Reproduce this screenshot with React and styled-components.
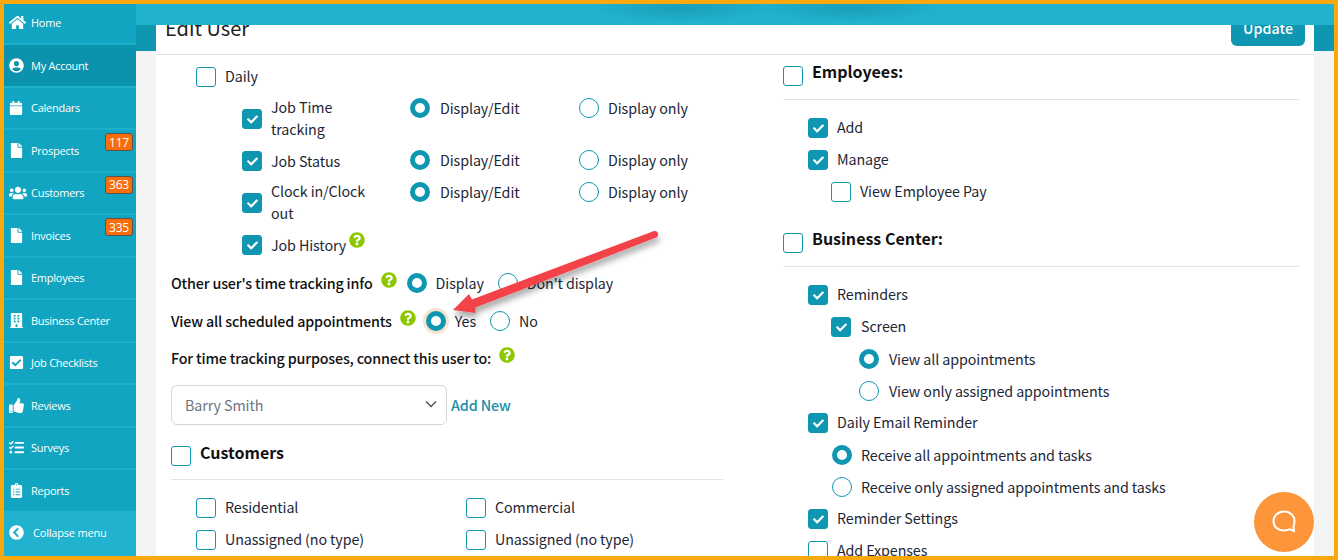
import React from 'react';
import styled, { createGlobalStyle } from 'styled-components';
import {
  FaHome, FaUserCircle, FaCalendar, FaFile, FaUsers, FaBuilding, FaCheckSquare,
  FaThumbsUp, FaTasks, FaClipboardList, FaChevronCircleLeft, FaQuestionCircle, FaCheck,
} from 'react-icons/fa';

const TEAL = '#0f96b0';
const INK = '#1d2636';

const Global = createGlobalStyle`
  html, body { margin: 0; padding: 0; background: #fff; }
  * { box-sizing: border-box; }
  body {
    font-family: "Noto Sans CJK JP", "Noto Sans", sans-serif;
    font-size: 14.3px;
    letter-spacing: -0.1px;
    color: ${INK};
  }
`;

const Frame = styled.div`
  position: relative;
  width: 1338px;
  height: 560px;
  border: 4px solid #f9a90e;
  display: flex;
  overflow: hidden;
`;

const Sidebar = styled.nav`
  width: 132px;
  flex: none;
  display: flex;
  flex-direction: column;
  background: #12a5c1;
`;

const NavItem = styled.div`
  position: relative;
  height: 42.5px;
  flex: none;
  display: flex;
  align-items: center;
  padding-left: 5px;
  border-bottom: 2px solid #1cb0cc;
  background: ${(p) => (p.$active ? '#0b93ad' : 'transparent')};
  color: #fff;
  font-family: "Open Sans", sans-serif;
  font-size: 11px;
  letter-spacing: -0.25px;
  &:first-child { margin-top: -1.5px; }
`;

const NavIcon = styled.span`
  width: 22px;
  flex: none;
  display: flex;
  justify-content: flex-start;
  font-size: ${(p) => p.$size || 15}px;
  svg { display: block; }
`;

const Badge = styled.span`
  position: absolute;
  right: 3px;
  top: 3px;
  width: 28px;
  height: 18px;
  display: flex;
  align-items: center;
  justify-content: center;
  background: #f86e0c;
  border: 1px solid #5a5347;
  border-radius: 3px;
  font-size: 12px;
  letter-spacing: -0.2px;
  color: #fff;
`;

const Collapse = styled.div`
  flex: 1;
  margin-top: -2px;
  position: relative;
  display: flex;
  align-items: center;
  padding: 0 0 1px 5px;
  gap: 9px;
  background: #20b2ce;
  color: #fff;
  font-family: "Open Sans", sans-serif;
  font-size: 11px;
  letter-spacing: -0.2px;
  svg { font-size: 15px; }
`;

const Main = styled.main`
  flex: 1;
  min-width: 0;
  display: flex;
  flex-direction: column;
`;

const TopBar = styled.header`
  position: relative;
  z-index: 2;
  height: 21px;
  flex: none;
  background:
    radial-gradient(90px 14px at 545px 4px, rgba(10, 110, 135, 0.3), transparent),
    radial-gradient(90px 14px at 715px 4px, rgba(10, 110, 135, 0.3), transparent),
    #20b2ce;
`;

const Content = styled.div`
  flex: 1;
  min-height: 0;
  overflow: hidden;
  padding: 0 20px;
  background: linear-gradient(#0f96b0 26px, #f4f4f4 26px);
`;

const Card = styled.section`
  margin-top: -30px;
  background: #fff;
`;

const CardHeader = styled.div`
  height: 60px;
  display: flex;
  align-items: flex-end;
  justify-content: space-between;
  padding: 0 9px 8px 9px;
  border-bottom: 1px solid #e3e3ec;
`;

const Title = styled.h1`
  margin: 0 0 1px;
  font-size: 20px;
  font-weight: 400;
  line-height: 34px;
  letter-spacing: 0;
  color: #222;
`;

const UpdateButton = styled.button`
  width: 74px;
  height: 34px;
  padding: 0 0 3px;
  border: 0;
  border-radius: 6px;
  background: ${TEAL};
  color: #fff;
  font: 500 14.3px "Noto Sans CJK JP", sans-serif;
`;

const Columns = styled.div`
  display: grid;
  grid-template-columns: 552px 516px;
  column-gap: 60px;
  padding: 6px 15px 0;
`;

const Column = styled.div`
  display: flex;
  flex-direction: column;
`;

const BoxMark = styled.span`
  width: 20px;
  height: 20px;
  flex: none;
  display: flex;
  align-items: center;
  justify-content: center;
  border: 1px solid ${TEAL};
  border-radius: 3px;
  background: ${(p) => (p.$on ? TEAL : '#fff')};
  color: #fff;
  font-size: 11px;
`;

const RadioMark = styled.span`
  width: 20px;
  height: 20px;
  flex: none;
  border-radius: 50%;
  background: #fff;
  border: ${(p) => (p.$on ? `5.5px solid ${TEAL}` : `1px solid ${TEAL}`)};
  box-shadow: ${(p) => (p.$glow ? '0 0 0 3px rgba(240, 190, 150, 0.45)' : 'none')};
`;

const Check = ({ on }) => <BoxMark $on={on}>{on && <FaCheck />}</BoxMark>;

const Line = styled.div`
  display: flex;
  align-items: center;
  height: 32px;
  gap: ${(p) => p.$gap || 9}px;
  margin-left: ${(p) => p.$indent || 0}px;
  line-height: 22px;
  white-space: nowrap;
`;

const LineText = styled.span`
  padding-bottom: ${(p) => (p.$radio ? 0 : 2)}px;
`;

const PermGrid = styled.div`
  display: grid;
  grid-template-columns: 168px 169px 1fr;
  row-gap: 9px;
  margin: 4px 0 0 71px;
  line-height: 22px;
`;

const PermName = styled.div`
  display: flex;
  align-items: center;
  gap: 9px;
`;

const PermText = styled.span`
  width: 110px;
  margin: ${(p) => (p.$single ? 0 : '-1px 0 1px')};
`;

const PermOption = styled.div`
  display: flex;
  align-items: flex-start;
  gap: ${(p) => p.$gap}px;
  margin-top: ${(p) => (p.$single ? 0 : 1)}px;
`;

const PermLabel = styled.span`
  margin-top: -1px;
`;

const Help = styled(FaQuestionCircle)`
  flex: none;
  color: #8cc800;
  font-size: 16px;
  position: relative;
  top: -3px;
`;

const Setting = styled.div`
  display: flex;
  align-items: center;
  height: 22px;
  margin-top: ${(p) => p.$top || 0}px;
  line-height: 22px;
  white-space: nowrap;
`;

const SettingName = styled.span`
  font-weight: 500;
  letter-spacing: -0.17px;
  color: #111;
  margin-right: ${(p) => p.$space || 8}px;
`;

const SettingOption = styled.span`
  display: flex;
  align-items: center;
  gap: 9px;
  margin-left: ${(p) => p.$left || 10}px;
`;

const SelectRow = styled.div`
  display: flex;
  align-items: center;
  gap: 4px;
  margin-top: 16px;
`;

const SelectBox = styled.div`
  width: 276px;
  height: 40px;
  display: flex;
  align-items: center;
  justify-content: space-between;
  padding: 0 9px 2px 13px;
  border: 1px solid #d5d3dd;
  border-radius: 6px;
  color: #6d7480;
`;

const AddNew = styled.a`
  font-weight: 500;
  margin-top: -2px;
  color: #1a8fa8;
`;

const SectionHead = styled.div`
  display: flex;
  gap: 9px;
  margin-top: ${(p) => p.$top || 0}px;
  padding-top: ${(p) => p.$pad || 0}px;
  height: ${(p) => p.$height}px;
  border-bottom: 1px solid #e3e3ec;
  font-size: 16px;
  font-weight: 700;
  line-height: ${(p) => p.$line || 11}px;
  letter-spacing: 0;
  color: #111;
`;

const TypeGrid = styled.div`
  display: grid;
  grid-template-columns: 270px 1fr;
  margin: 12px 0 0 25px;
`;

const RowSpacer = styled.div`
  height: 12px;
  flex: none;
`;

const Arrow = styled.svg`
  position: absolute;
  left: 0;
  top: 0;
  width: 1330px;
  height: 552px;
  pointer-events: none;
  z-index: 3;
`;

const ChatButton = styled.div`
  position: absolute;
  z-index: 3;
  left: 1250px;
  top: 488px;
  width: 60px;
  height: 60px;
  border-radius: 50%;
  background: #fd953a;
  display: flex;
  align-items: center;
  justify-content: center;
`;

const nav = [
  ['Home', FaHome, 17],
  ['My Account', FaUserCircle, 15, null, true],
  ['Calendars', FaCalendar, 14],
  ['Prospects', FaFile, 15, '117'],
  ['Customers', FaUsers, 18, '363'],
  ['Invoices', FaFile, 15, '335'],
  ['Employees', FaFile, 15],
  ['Business Center', FaBuilding, 15],
  ['Job Checklists', FaCheckSquare, 15],
  ['Reviews', FaThumbsUp, 15],
  ['Surveys', FaTasks, 15],
  ['Reports', FaClipboardList, 15],
];

const Perm = ({ lines, single, help }) => (
  <>
    <PermName>
      <Check on />
      <PermText $single={single}>
        {lines.map((l, i) => (
          <React.Fragment key={l}>
            {i > 0 && <br />}
            {l}
          </React.Fragment>
        ))}
        {help && <> <Help /></>}
      </PermText>
    </PermName>
    {!help && (
      <>
        <PermOption $single={single} $gap={10}>
          <RadioMark $on />
          <PermLabel>Display/Edit</PermLabel>
        </PermOption>
        <PermOption $single={single} $gap={9}>
          <RadioMark />
          <PermLabel>Display only</PermLabel>
        </PermOption>
      </>
    )}
  </>
);

const CheckLine = ({ on, indent, gap, children }) => (
  <Line $indent={indent} $gap={gap}>
    <Check on={on} />
    <LineText>{children}</LineText>
  </Line>
);

const RadioLine = ({ on, indent, gap = 10, children }) => (
  <Line $indent={indent} $gap={gap}>
    <RadioMark $on={on} />
    <LineText $radio>{children}</LineText>
  </Line>
);

export default function App() {
  return (
    <>
      <Global />
      <Frame>
        <Sidebar>
          {nav.map(([label, Icon, size, badge, active]) => (
            <NavItem key={label} $active={active}>
              <NavIcon $size={size}><Icon /></NavIcon>
              {label}
              {badge && <Badge>{badge}</Badge>}
            </NavItem>
          ))}
          <Collapse><FaChevronCircleLeft />Collapse menu</Collapse>
        </Sidebar>
        <Main>
          <TopBar />
          <Content>
            <Card>
              <CardHeader>
                <Title>Edit User</Title>
                <UpdateButton>Update</UpdateButton>
              </CardHeader>
              <Columns>
                <Column>
                  <CheckLine indent={25}>Daily</CheckLine>
                  <PermGrid>
                    <Perm lines={['Job Time', 'tracking']} />
                    <Perm lines={['Job Status']} single />
                    <Perm lines={['Clock in/Clock', 'out']} />
                    <Perm lines={['Job History']} help single />
                  </PermGrid>
                  <Setting $top={16}>
                    <SettingName>Other user's time tracking info</SettingName>
                    <Help />
                    <SettingOption><RadioMark $on />Display</SettingOption>
                    <SettingOption $left={14}><RadioMark />Don't display</SettingOption>
                  </Setting>
                  <Setting $top={16}>
                    <SettingName>View all scheduled appointments</SettingName>
                    <Help />
                    <SettingOption><RadioMark $on $glow />Yes</SettingOption>
                    <SettingOption $left={14}><RadioMark />No</SettingOption>
                  </Setting>
                  <Setting $top={15}>
                    <SettingName>For time tracking purposes, connect this user to:</SettingName>
                    <Help />
                  </Setting>
                  <SelectRow>
                    <SelectBox>
                      Barry Smith
                      <svg width="12" height="8" viewBox="0 0 12 8" fill="none" stroke="#555" strokeWidth="1.5"><path d="M1 1.5l5 5 5-5" /></svg>
                    </SelectBox>
                    <AddNew>Add New</AddNew>
                  </SelectRow>
                  <SectionHead $top={21} $height={34} $line={13}>
                    <Check />
                    <span>Customers</span>
                  </SectionHead>
                  <TypeGrid>
                    <CheckLine>Residential</CheckLine>
                    <CheckLine>Commercial</CheckLine>
                    <CheckLine>Unassigned (no type)</CheckLine>
                    <CheckLine>Unassigned (no type)</CheckLine>
                  </TypeGrid>
                </Column>
                <Column>
                  <SectionHead $pad={5} $height={39}>
                    <Check />
                    <span>Employees:</span>
                  </SectionHead>
                  <RowSpacer />
                  <CheckLine on indent={25}>Add</CheckLine>
                  <CheckLine on indent={25}>Manage</CheckLine>
                  <CheckLine indent={48}>View Employee Pay</CheckLine>
                  <SectionHead $top={25} $height={34}>
                    <Check />
                    <span>Business Center:</span>
                  </SectionHead>
                  <RowSpacer />
                  <CheckLine on indent={25}>Reminders</CheckLine>
                  <CheckLine on indent={48} gap={10}>Screen</CheckLine>
                  <RadioLine on indent={76}>View all appointments</RadioLine>
                  <RadioLine indent={76}>View only assigned appointments</RadioLine>
                  <CheckLine on indent={25}>Daily Email Reminder</CheckLine>
                  <RadioLine on indent={49} gap={9}>Receive all appointments and tasks</RadioLine>
                  <RadioLine indent={49} gap={9}>Receive only assigned appointments and tasks</RadioLine>
                  <CheckLine on indent={25}>Reminder Settings</CheckLine>
                  <CheckLine indent={25}>Add Expenses</CheckLine>
                </Column>
              </Columns>
            </Card>
          </Content>
        </Main>
        <Arrow viewBox="4 4 1330 552">
          <defs>
            <filter id="arrowShadow" x="-20%" y="-30%" width="140%" height="170%">
              <feDropShadow dx="1" dy="5" stdDeviation="3" floodColor="#000" floodOpacity="0.35" />
            </filter>
          </defs>
          <path
            d="M453 310 L469 294 L472 299.5 L654 231 Q658 230.5 658 234.5 Q658 237.5 655 238 L475.5 307.5 L475.5 313 Z"
            fill="#f4424a"
            filter="url(#arrowShadow)"
          />
        </Arrow>
        <ChatButton>
          <svg width="26" height="26" viewBox="0 0 26 26" fill="none" stroke="#fff" strokeWidth="2" strokeLinejoin="round">
            <path d="M13 2.5c6 0 10.5 4 10.5 9.8 0 3-1 5.6-1 5.6l.6 4.5-4.5-2.2c-1.6.9-3.5 1.3-5.6 1.3-6 0-10.5-3.7-10.5-9.2S7 2.5 13 2.5z" />
          </svg>
        </ChatButton>
      </Frame>
    </>
  );
}
